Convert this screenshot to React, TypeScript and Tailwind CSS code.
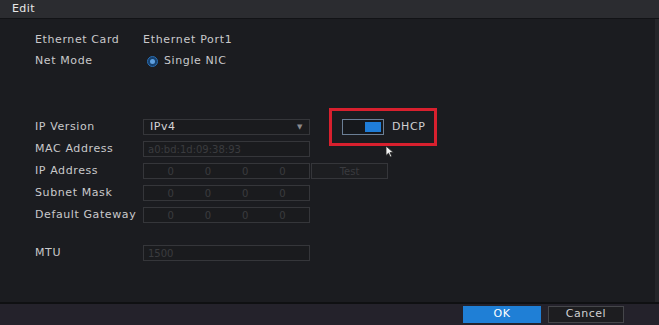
const font = { fontFamily: "'DejaVu Sans', 'Liberation Sans', sans-serif" }

function Row({ label, children, className = "" }: { label: string; children: React.ReactNode; className?: string }) {
  return (
    <div className={`flex items-center h-[16px] ${className}`}>
      <div className="w-[108px] text-[11px] tracking-[0.6px] text-[#c9c9cb] whitespace-nowrap">{label}</div>
      {children}
    </div>
  )
}

function Box({ children, className = "" }: { children?: React.ReactNode; className?: string }) {
  return (
    <div className={`w-[167px] h-[16px] border border-[#35363a] bg-[#1a1b1e] flex items-center text-[10px] text-[#3a3b3f] ${className}`}>
      {children}
    </div>
  )
}

function IpBox() {
  return (
    <Box className="justify-around px-2">
      <span>0</span>
      <span>0</span>
      <span>0</span>
      <span>0</span>
    </Box>
  )
}

export default function App() {
  return (
    <div className="w-[659px] h-[325px] bg-[#1b1c20] flex flex-col overflow-hidden" style={font}>
      {/* title bar */}
      <div className="h-[19px] bg-[#2b2c30] border-b border-[#121316] flex items-center px-[12px] text-[11px] tracking-[0.4px] text-[#e8e8e8]">
        Edit
      </div>

      <div className="flex-1 flex">
        <div className="flex-1 pl-[35px] pt-[13px]">
          <Row label="Ethernet Card">
            <span className="text-[11px] tracking-[0.7px] text-[#c9c9cb]">Ethernet Port1</span>
          </Row>
          <Row label="Net Mode" className="mt-[5px]">
            <span className="w-[11px] h-[11px] rounded-full bg-[#16406e] border border-[#2a6db0] flex items-center justify-center ml-[4px] mr-[6px]">
              <span className="w-[5px] h-[5px] rounded-full bg-[#5fa0e0]" />
            </span>
            <span className="text-[11px] tracking-[0.6px] text-[#c9c9cb]">Single NIC</span>
          </Row>

          <div className="flex flex-col gap-[6px] mt-[50px]">
            <Row label="IP Version">
              <Box className="justify-between px-[6px] text-[11px] tracking-[0.5px] text-[#d4d4d6] border-[#3c3d41]">
                <span>IPv4</span>
                <span className="text-[7px] text-[#8a8a8c]">▼</span>
              </Box>
              {/* highlighted DHCP switch */}
              <div className="relative ml-[19px] my-[-11px] w-[108px] h-[38px] border-[3px] border-[#d8202e] flex items-center pl-[10px]">
                <div className="w-[42px] h-[16px] border border-[#6b7f96] bg-[#16181c] flex justify-end p-[2px]">
                  <div className="w-[16px] h-full bg-[#1f7dd8]" />
                </div>
                <span className="ml-[8px] text-[11px] tracking-[0.6px] text-[#d0d0d2]">DHCP</span>
                <svg className="absolute left-[53px] top-[34px]" width="10" height="13" viewBox="0 0 10 13">
                  <path d="M1 1 L1 10.5 L3.5 8.2 L5.3 12 L6.8 11.3 L5 7.6 L8.4 7.6 Z" fill="#f2f2f2" stroke="#222" strokeWidth="0.8" />
                </svg>
              </div>
            </Row>
            <Row label="MAC Address">
              <Box className="px-[4px]">a0:bd:1d:09:38:93</Box>
            </Row>
            <Row label="IP Address">
              <IpBox />
              <div className="w-[77px] h-[16px] ml-[1px] border border-[#35363a] bg-[#1d1e21] flex items-center justify-center text-[10px] text-[#3a3b3f]">
                Test
              </div>
            </Row>
            <Row label="Subnet Mask">
              <IpBox />
            </Row>
            <Row label="Default Gateway">
              <IpBox />
            </Row>
            <Row label="MTU" className="mt-[16px]">
              <Box className="px-[4px]">1500</Box>
            </Row>
          </div>
        </div>
        <div className="w-[4px] bg-[#25262a]" />
      </div>

      {/* footer */}
      <div className="h-[23px] bg-[#24222b] border-t-2 border-[#0f1012] flex items-center justify-end pr-[35px] gap-[7px]">
        <div className="w-[78px] h-[17px] bg-[#1f7fd6] flex items-center justify-center text-[11px] tracking-[0.5px] text-white">OK</div>
        <div className="w-[76px] h-[17px] bg-[#1d1d20] border border-[#45464a] flex items-center justify-center text-[11px] tracking-[0.5px] text-[#d0d0d2]">
          Cancel
        </div>
      </div>
    </div>
  )
}
